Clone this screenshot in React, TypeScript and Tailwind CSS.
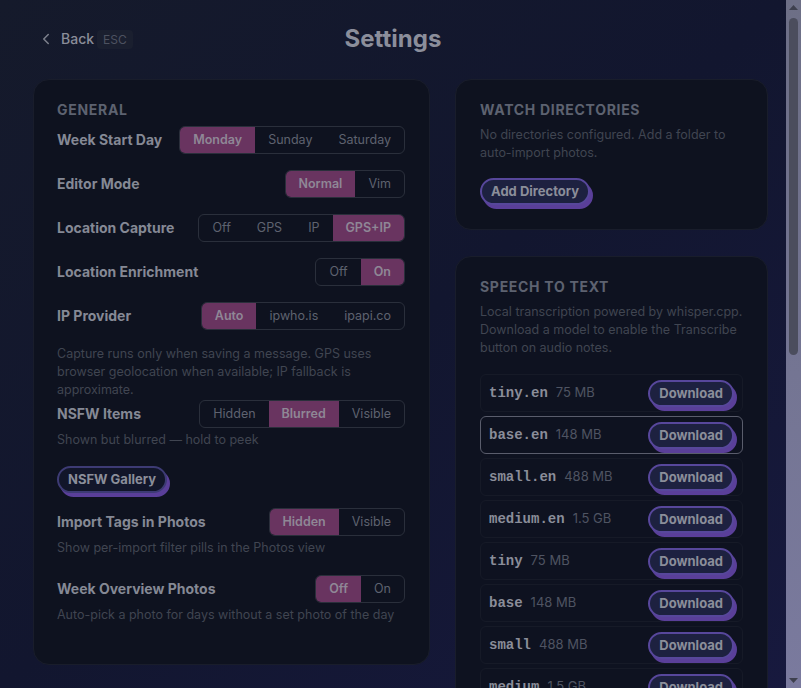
import React from "react";
import { ChevronLeft } from "lucide-react";

type Seg = { options: string[]; active: string };

const Segmented: React.FC<Seg> = ({ options, active }) => (
  <div className="flex h-7 overflow-hidden rounded-md border border-[#2a2f3b]">
    {options.map((o) => (
      <div
        key={o}
        className={`flex items-center px-[13px] text-[12.5px] ${
          o === active ? "bg-[#693460] font-semibold text-[#8f8796]" : "text-[#5e626f]"
        }`}
      >
        {o}
      </div>
    ))}
  </div>
);

const Row: React.FC<{ label: string } & Seg & { className?: string }> = ({ label, options, active, className }) => (
  <div className={`flex items-center justify-between ${className ?? ""}`}>
    <span className="text-sm font-bold text-[#858995]">{label}</span>
    <Segmented options={options} active={active} />
  </div>
);

const Desc: React.FC<{ children: React.ReactNode; className?: string }> = ({ children, className }) => (
  <p className={`text-[12.5px] leading-[18px] text-[#404551] ${className ?? ""}`}>{children}</p>
);

const PillButton: React.FC<{ children: React.ReactNode; dark?: boolean }> = ({ children, dark }) => (
  <button
    className={`h-[27px] rounded-full border-2 px-[9px] text-[13px] font-bold text-[#8b8e9a] shadow-[3px_4px_0_#5a3f99] ${
      dark ? "border-[#3d3b74] bg-[#12162a] px-[8px] text-[12.5px]" : "border-[#57479b] bg-[#1d2140]"
    }`}
  >
    {children}
  </button>
);

const models = [
  { name: "tiny.en", size: "75 MB" },
  { name: "base.en", size: "148 MB", hover: true },
  { name: "small.en", size: "488 MB" },
  { name: "medium.en", size: "1.5 GB" },
  { name: "tiny", size: "75 MB" },
  { name: "base", size: "148 MB" },
  { name: "small", size: "488 MB" },
  { name: "medium", size: "1.5 GB" },
];

export default function App() {
  return (
    <div className="flex h-screen w-full overflow-hidden font-['Inter',sans-serif]">
      <div className="h-full flex-1 overflow-hidden bg-gradient-to-br from-[#151a2b] via-[#12162f] to-[#17193e]">
        {/* header */}
        <div className="mt-[23px] grid h-8 grid-cols-[1fr_auto_1fr] items-center px-[33px]">
          <div className="flex items-center">
            <button className="flex items-center gap-[6px] pl-[4px] text-sm font-medium text-[#8a8d99]">
              <ChevronLeft size={18} strokeWidth={2} className="text-[#7d808c]" />
              Back
            </button>
            <span className="ml-[3px] rounded bg-[#1a1f2f] px-[6px] py-[3px] text-[12px] leading-[13px] text-[#4d5260]">
              ESC
            </span>
          </div>
          <h1 className="text-2xl font-bold text-[#8b8e9b]">Settings</h1>
          <div />
        </div>

        <div className="mt-6 flex gap-[26px] pl-[33px] pr-[17px]">
          {/* General */}
          <div className="w-[397px] shrink-0 self-start rounded-2xl border border-[#191d2b] bg-[#0e121f] pb-[40px] pl-[23px] pr-6 pt-5">
            <h2 className="text-sm font-bold leading-5 tracking-wider text-[#5d6270]">GENERAL</h2>
            <Row className="mt-[6px]" label="Week Start Day" options={["Monday", "Sunday", "Saturday"]} active="Monday" />
            <Row className="mt-4" label="Editor Mode" options={["Normal", "Vim"]} active="Normal" />
            <Row className="mt-4" label="Location Capture" options={["Off", "GPS", "IP", "GPS+IP"]} active="GPS+IP" />
            <Row className="mt-4" label="Location Enrichment" options={["Off", "On"]} active="On" />
            <Row className="mt-4" label="IP Provider" options={["Auto", "ipwho.is", "ipapi.co"]} active="Auto" />
            <Desc className="mt-[15px]">
              Capture runs only when saving a message. GPS uses browser geolocation when available; IP fallback is
              approximate.
            </Desc>
            <Row className="mt-px" label="NSFW Items" options={["Hidden", "Blurred", "Visible"]} active="Blurred" />
            <Desc className="mt-[3px]">Shown but blurred — hold to peek</Desc>
            <div className="mt-[17px]">
              <PillButton dark>NSFW Gallery</PillButton>
            </div>
            <Row className="mt-[15px]" label="Import Tags in Photos" options={["Hidden", "Visible"]} active="Hidden" />
            <Desc className="mt-[3px]">Show per-import filter pills in the Photos view</Desc>
            <Row className="mt-[18px]" label="Week Overview Photos" options={["Off", "On"]} active="Off" />
            <Desc className="mt-[3px]">Auto-pick a photo for days without a set photo of the day</Desc>
          </div>

          {/* right column */}
          <div className="-ml-px flex w-[313px] shrink-0 flex-col gap-[26px]">
            <div className="rounded-2xl border border-[#191d2b] bg-[#0e121f] px-6 pb-6 pt-5">
              <h2 className="text-sm font-bold leading-5 tracking-wider text-[#5d6270]">WATCH DIRECTORIES</h2>
              <Desc className="mt-[6px]">No directories configured. Add a folder to auto-import photos.</Desc>
              <div className="mt-4">
                <PillButton>Add Directory</PillButton>
              </div>
            </div>

            <div className="rounded-2xl border border-[#191d2b] bg-[#0e1220] px-6 pb-6 pt-5">
              <h2 className="text-sm font-bold leading-5 tracking-wider text-[#5d6270]">SPEECH TO TEXT</h2>
              <Desc className="mt-[6px]">
                Local transcription powered by whisper.cpp. Download a model to enable the Transcribe button on audio
                notes.
              </Desc>
              <div className="mt-[17px] flex flex-col gap-1">
                {models.map((m) => (
                  <div
                    key={m.name}
                    className={`flex h-[38px] items-center justify-between rounded-md border pl-2 pr-2 ${
                      m.hover ? "border-[#5a5d6c]" : "border-[#161a27]"
                    }`}
                  >
                    <div className="flex items-baseline gap-2">
                      <span className="font-['Liberation_Mono',monospace] text-sm font-bold text-[#8a8d99]">
                        {m.name}
                      </span>
                      <span className="text-[13px] text-[#4f5462]">{m.size}</span>
                    </div>
                    <PillButton>Download</PillButton>
                  </div>
                ))}
              </div>
            </div>
          </div>
        </div>
      </div>

      {/* scrollbar */}
      <div className="flex h-full w-[15px] shrink-0 flex-col bg-gradient-to-b from-[#6d6f86] to-[#7a7a9e]">
        <div className="flex h-[15px] items-center justify-center">
          <svg width="9" height="5" viewBox="0 0 9 5">
            <path d="M4.5 0 L9 5 L0 5 Z" fill="#3e404e" />
          </svg>
        </div>
        <div className="mx-auto mt-[3px] h-[337px] w-[9px] rounded-full bg-[#4b4d5d]" />
        <div className="flex-1" />
        <div className="flex h-[15px] items-center justify-center">
          <svg width="9" height="5" viewBox="0 0 9 5">
            <path d="M0 0 L9 0 L4.5 5 Z" fill="#3e404e" />
          </svg>
        </div>
      </div>
    </div>
  );
}
